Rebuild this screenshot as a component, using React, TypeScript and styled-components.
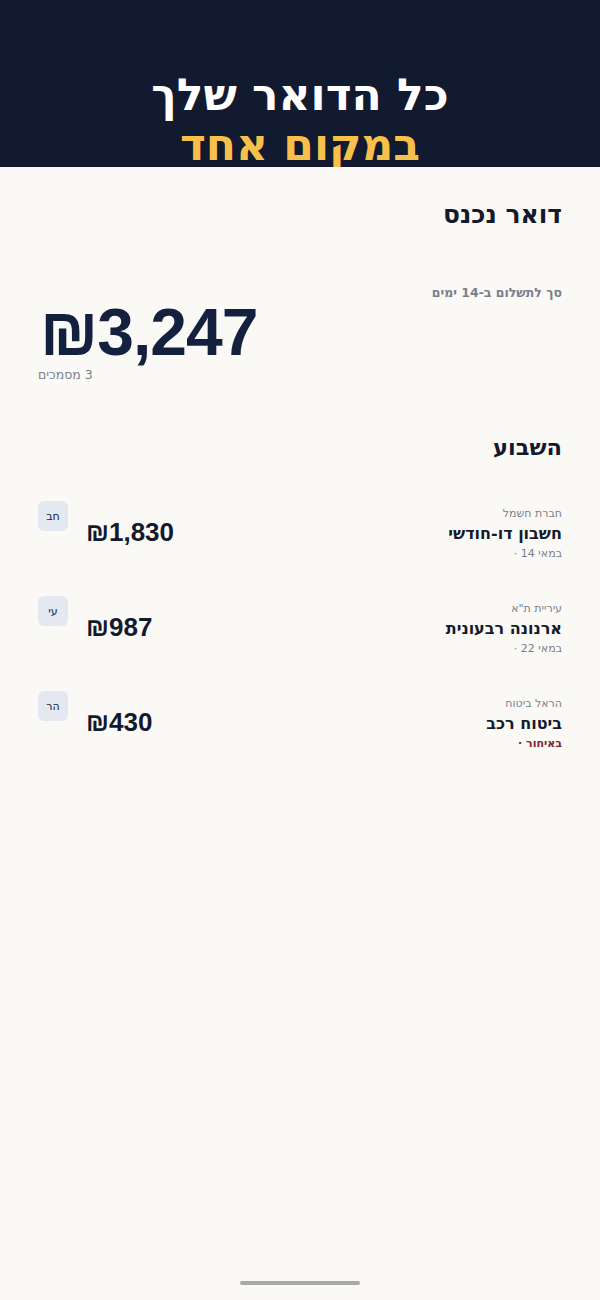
import styled, { createGlobalStyle } from 'styled-components';

interface IBill {
	id: string;
	issuer: string;
	title: string;
	note: string;
	late?: boolean;
	amount: string;
	initials: string;
}

const bills: IBill[] = [
	{ id: 'elec', issuer: 'חברת חשמל', title: 'חשבון דו-חודשי', note: 'במאי 14 ·', amount: '₪1,830', initials: 'חב' },
	{ id: 'arnona', issuer: 'עיריית ת"א', title: 'ארנונה רבעונית', note: 'במאי 22 ·', amount: '₪987', initials: 'עי' },
	{ id: 'car', issuer: 'הראל ביטוח', title: 'ביטוח רכב', note: 'באיחור ·', late: true, amount: '₪430', initials: 'הר' },
];

function App() {
	return (
		<>
			<GlobalStyle />
			<Page dir="rtl">
				<Hero>
					<HeroLine>כל הדואר שלך</HeroLine>
					<HeroLine $accent>במקום אחד</HeroLine>
				</Hero>

				<Main>
					<PageTitle>דואר נכנס</PageTitle>

					<Summary>
						<SummaryLabel>סך לתשלום ב-14 ימים</SummaryLabel>
						<SummaryTotal>
							<BigAmount>₪3,247</BigAmount>
							<DocCount>3 מסמכים</DocCount>
						</SummaryTotal>
					</Summary>

					<SectionTitle>השבוע</SectionTitle>

					<BillList>
						{bills.map((bill) => (
							<BillRow key={bill.id}>
								<BillInfo>
									<Issuer>{bill.issuer}</Issuer>
									<BillTitle>{bill.title}</BillTitle>
									<Note $late={bill.late}>{bill.note}</Note>
								</BillInfo>
								<BillAmount>{bill.amount}</BillAmount>
								<Avatar>{bill.initials}</Avatar>
							</BillRow>
						))}
					</BillList>
				</Main>

				<HomeBar />
			</Page>
		</>
	);
}

const GlobalStyle = createGlobalStyle`
	* {
		box-sizing: border-box;
	}

	body {
		margin: 0;
		background: #faf9f6;
		font-family: "DejaVu Sans", sans-serif;
	}
`;

const Page = styled.div`
	position: relative;
	height: 1300px;
	background: #faf9f6;
	color: #141a2c;
`;

const Hero = styled.header`
	height: 167px;
	overflow: hidden;
	background: #111a2f;
	display: flex;
	flex-direction: column;
	align-items: center;
	padding-top: 70px;
`;

const HeroLine = styled.div<{ $accent?: boolean }>`
	font-family: "DejaVu Sans", sans-serif;
	font-weight: 700;
	font-size: 44px;
	line-height: 50px;
	color: ${(props) => (props.$accent ? '#f7c04a' : '#ffffff')};
`;

const Main = styled.main`
	padding: 0 38px;
`;

const PageTitle = styled.h1`
	margin: 0;
	padding-top: 33px;
	font-size: 25px;
	font-weight: 700;
	line-height: 30px;
	color: #141a2c;
`;

const Summary = styled.section`
	margin-top: 55px;
	display: flex;
	flex-direction: column;
`;

const SummaryLabel = styled.div`
	font-size: 12.5px;
	font-weight: 700;
	color: #7a7f8c;
	line-height: 16px;
`;

const SummaryTotal = styled.div`
	align-self: flex-end;
	display: flex;
	flex-direction: column;
	align-items: flex-end;
`;

const BigAmount = styled.div`
	direction: ltr;
	font-family: "Liberation Sans", Arial, sans-serif;
	font-size: 66px;
	font-weight: 700;
	line-height: 62px;
	color: #13213f;
	letter-spacing: -1px;
	margin-left: 2px;
`;

const DocCount = styled.div`
	font-size: 12.5px;
	color: #7a7f8c;
	line-height: 16px;
	margin-top: 4px;
`;

const SectionTitle = styled.h2`
	margin: 50px 0 0;
	font-size: 22.5px;
	font-weight: 700;
	line-height: 28px;
	color: #141a2c;
`;

const BillList = styled.ul`
	list-style: none;
	margin: 44px 0 0;
	padding: 0;
	display: flex;
	flex-direction: column;
	gap: 38px;
`;

const BillRow = styled.li`
	display: flex;
	align-items: center;
	height: 57px;
`;

const BillInfo = styled.div`
	flex: 1;
	display: flex;
	flex-direction: column;
	gap: 3px;
`;

const Issuer = styled.div`
	font-size: 11px;
	color: #7a7f8c;
	line-height: 14px;
`;

const BillTitle = styled.div`
	font-size: 16px;
	font-weight: 700;
	line-height: 20px;
	color: #141a2c;
`;

const Note = styled.div<{ $late?: boolean }>`
	font-size: 11px;
	line-height: 14px;
	color: ${(props) => (props.$late ? '#7d2430' : '#7a7f8c')};
	font-weight: ${(props) => (props.$late ? 700 : 400)};
`;

const BillAmount = styled.div`
	direction: ltr;
	font-family: "Liberation Sans", Arial, sans-serif;
	font-size: 26px;
	font-weight: 700;
	color: #141a2c;
	margin-left: 18px;
	margin-top: -3px;
`;

const Avatar = styled.div`
	align-self: flex-start;
	width: 30px;
	height: 30px;
	border-radius: 6px;
	background: #e3e8f1;
	display: flex;
	align-items: center;
	justify-content: center;
	font-size: 11px;
	color: #13213f;
	margin-top: -4px;
`;

const HomeBar = styled.div`
	position: absolute;
	bottom: 15px;
	left: 50%;
	transform: translateX(-50%);
	width: 120px;
	height: 4px;
	border-radius: 2px;
	background: #a8a8a8;
`;

export default App;
